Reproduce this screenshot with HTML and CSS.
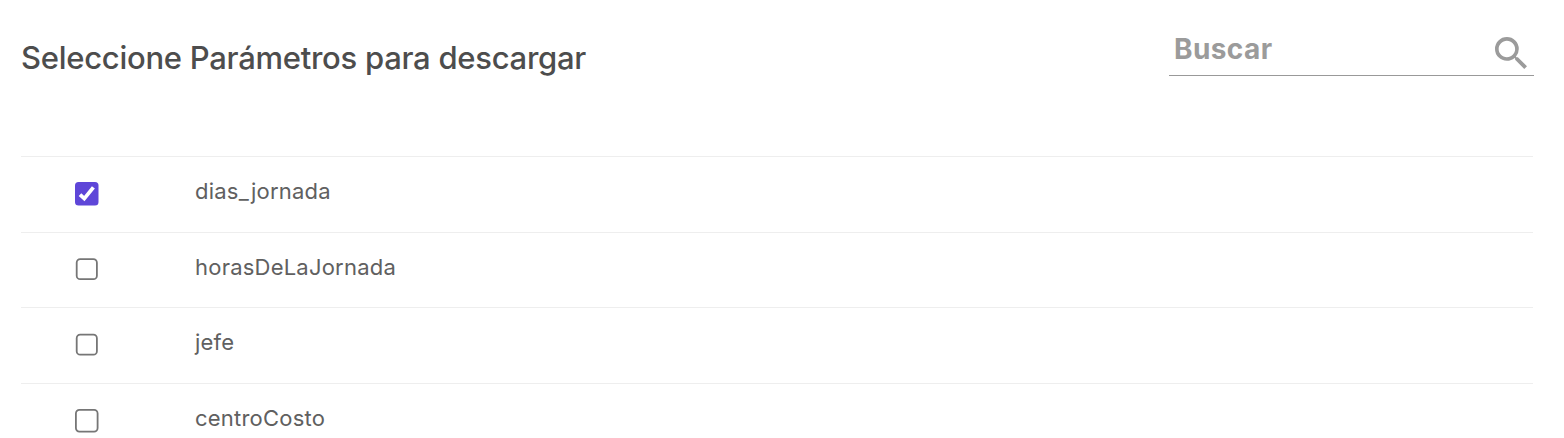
FILE: index.html
```html
<!DOCTYPE html>
<html lang="es">
<head>
<meta charset="utf-8">
<title>Parámetros</title>
<link rel="stylesheet" href="styles.css">
</head>
<body>
<main class="panel">
  <header class="header">
    <h1 class="title">Seleccione Parámetros para descargar</h1>
    <label class="search">
      <span class="search-label">Buscar</span>
      <svg class="search-icon" viewBox="3 3 17.49 17.49"><path d="M15.5 14h-.79l-.28-.27A6.471 6.471 0 0 0 16 9.5 6.5 6.5 0 1 0 9.5 16c1.61 0 3.09-.59 4.23-1.57l.27.28v.79l5 4.99L20.49 19l-4.99-5zm-6 0C7.01 14 5 11.99 5 9.5S7.01 5 9.5 5 14 7.01 14 9.5 11.99 14 9.5 14z"/></svg>
    </label>
  </header>
  <ul class="list">
    <li class="row"><svg class="box" viewBox="0 0 24 24"><rect class="checked" width="23.5" height="23.5" rx="3.5"/><path class="tick" d="M5 12.6L9.3 16.6L18.4 5.4"/></svg><span class="name">dias_jornada</span></li>
    <li class="row"><svg class="box" viewBox="0 0 24 24"><rect class="empty" x="1.7" y="1.2" width="20.2" height="20" rx="3.5"/></svg><span class="name">horasDeLaJornada</span></li>
    <li class="row"><svg class="box" viewBox="0 0 24 24"><rect class="empty" x="1.7" y="1.7" width="20.2" height="20" rx="3.5"/></svg><span class="name">jefe</span></li>
    <li class="row"><svg class="box" viewBox="0 0 24 24"><rect class="empty" x="0.9" y="0.9" width="21.7" height="21.7" rx="3.5"/></svg><span class="name">centroCosto</span></li>
  </ul>
</main>
</body>
</html>
```

FILE: styles.css
```css
* { box-sizing: border-box; }
body { margin: 0; background: #fff; font-family: Inter, sans-serif; overflow: hidden; }
.panel { height: 438px; overflow: hidden; padding: 0 31px 0 21px; }
.header { display: flex; justify-content: space-between; height: 156px; }
.title { margin: 39px 0 0; font-size: 31px; line-height: 38px; font-weight: 500; letter-spacing: -0.27px; color: #4d4d4d; white-space: nowrap; }
.search { display: flex; justify-content: space-between; width: 365px; height: 47px; margin: 29px -1px 0 0; padding: 0 8px 0 5px; border-bottom: 1px solid #999; }
.search-label { margin-top: 2px; font-size: 28px; line-height: 36px; font-weight: 700; letter-spacing: 0.4px; color: #9b9b9b; }
.search-icon { width: 32px; height: 32px; margin: 8px -0.5px 0 0; fill: #9b9b9b; }
.list { margin: 0; padding: 0; list-style: none; }
.row { display: flex; height: 75.67px; padding-left: 54px; border-top: 1px solid #eee; }
.box { width: 24px; height: 24px; margin-top: 25px; flex: none; }
.checked { fill: #5e46d8; }
.tick { fill: none; stroke: #fff; stroke-width: 3.8; }
.empty { fill: #fff; stroke: #767676; stroke-width: 1.8; }
.name { margin: 19px 0 0 96px; font-size: 22px; line-height: 30px; letter-spacing: 0.22px; color: #606060; }
```
